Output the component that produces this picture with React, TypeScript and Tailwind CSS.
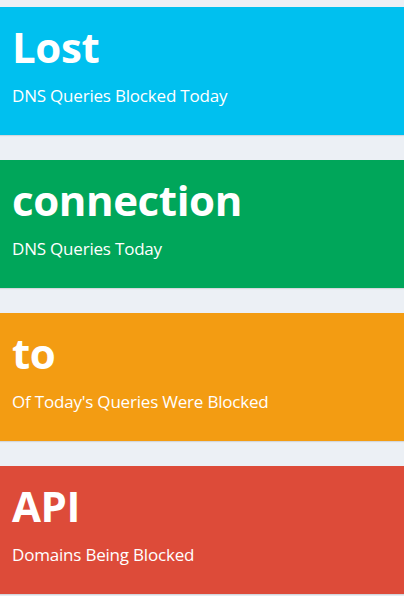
import React from "react";

const boxes = [
  { title: "Lost", label: "DNS Queries Blocked Today", bg: "bg-[#00c0ef]" },
  { title: "connection", label: "DNS Queries Today", bg: "bg-[#00a65a]" },
  { title: "to", label: "Of Today's Queries Were Blocked", bg: "bg-[#f39c12]" },
  { title: "API", label: "Domains Being Blocked", bg: "bg-[#dd4b39]" },
];

export default function App() {
  return (
    <div
      className="min-h-[596px] w-[404px] bg-[#ecf0f5] pt-[7px] flex flex-col gap-[25px] overflow-hidden"
      style={{ fontFamily: '"Open Sans", "Noto Sans", sans-serif' }}
    >
      {boxes.map((b) => (
        <div
          key={b.title}
          className={`${b.bg} h-[128px] w-full shrink-0 px-[12px] pt-[19px] text-white shadow-[0_1px_1px_rgba(0,0,0,0.1)]`}
        >
          <h3 className="m-0 whitespace-nowrap text-[42px] font-bold leading-[42px] tracking-[-0.4px]">
            {b.title}
          </h3>
          <p className="mt-[18px] whitespace-nowrap text-[17px] leading-[20px] tracking-[-0.2px]">
            {b.label}
          </p>
        </div>
      ))}
    </div>
  );
}
